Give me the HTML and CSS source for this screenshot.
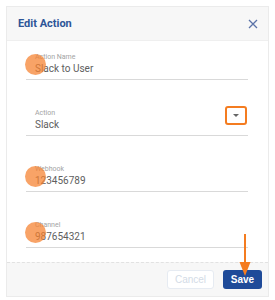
FILE: index.html
```html
<!DOCTYPE html>
<html lang="en">
<head>
    <meta charset="UTF-8">
    <meta name="viewport" content="width=device-width, initial-scale=1.0">
    <title>Edit Action</title>
    <link rel="stylesheet" href="styles.css">
</head>
<body>
    <div class="modal">
        <div class="modal-header">
            <div class="modal-title">Edit Action</div>
            <svg class="close-icon" width="10" height="10" viewBox="0 0 10 10"><path d="M1 1L9 9M9 1L1 9" stroke="#5b73a8" stroke-width="1.3" fill="none"/></svg>
        </div>
        <div class="modal-body">
            <div class="field">
                <div class="field-label">Action Name</div>
                <div class="field-value">Slack to User</div>
                <span class="dot"></span>
            </div>
            <div class="field">
                <div class="field-label">Action</div>
                <div class="field-value">Slack</div>
                <span class="select-box"><span class="caret"></span></span>
            </div>
            <div class="field">
                <div class="field-label">Webhook</div>
                <div class="field-value">123456789</div>
                <span class="dot"></span>
            </div>
            <div class="field">
                <div class="field-label">Channel</div>
                <div class="field-value">987654321</div>
                <span class="dot"></span>
            </div>
        </div>
        <div class="modal-footer">
            <button class="btn btn-cancel">Cancel</button>
            <button class="btn btn-save">Save</button>
        </div>
        <svg class="arrow" width="14" height="44" viewBox="0 0 14 44"><path d="M7 0V32" stroke="#f47c20" stroke-width="2"/><path d="M1.5 28L7 42L12.5 28Z" fill="#f47c20"/></svg>
    </div>
</body>
</html>
```

FILE: styles.css
```css
* { margin: 0; padding: 0; box-sizing: border-box; }
body { font-family: Roboto, "Liberation Sans", Arial, sans-serif; background: #fff; width: 275px; height: 300px; overflow: hidden; }
.modal { position: relative; margin: 6px 6px 0 6px; height: 291px; border: 1px solid #ebebeb; background: #fff; display: flex; flex-direction: column; }
.modal-header { height: 34px; background: #f7f7f7; display: flex; align-items: center; justify-content: space-between; padding: 0 10px 0 11px; border-bottom: 1px solid #efefef; }
.modal-title { font-size: 11px; font-weight: bold; color: #2e5597; }
.close-icon { display: block; }
.modal-body { flex-grow: 1; padding: 11px 20px 0 19px; display: flex; flex-direction: column; gap: 28px; }
.field { position: relative; border-bottom: 1px solid #d9d9d9; padding: 0 0 3px 9px; }
.field-label { font-size: 7px; line-height: 10px; color: #a3a3a3; }
.field-value { font-size: 10px; line-height: 14px; color: #606060; }
.dot { position: absolute; left: -1px; top: 2px; width: 21px; height: 21px; border-radius: 50%; background: rgba(245, 128, 45, 0.72); }
.select-box { position: absolute; right: 1px; top: -2px; width: 22px; height: 19px; border: 2px solid #f47c20; border-radius: 3px; display: flex; align-items: center; justify-content: center; }
.caret { width: 0; height: 0; border-left: 3px solid transparent; border-right: 3px solid transparent; border-top: 3px solid #666; }
.modal-footer { height: 34px; background: #f7f7f7; border-top: 1px dashed #e2e2e2; display: flex; align-items: center; justify-content: flex-end; gap: 9px; padding-right: 6px; }
.btn { font-family: "Liberation Sans", Arial, sans-serif; font-size: 10px; height: 19px; border-radius: 3px; cursor: pointer; }
.btn-cancel { width: 47px; background: #fff; border: 1px solid #e6ebf2; color: #d3dbe6; }
.btn-save { width: 39px; background: #1f4b99; border: none; color: #fff; font-weight: bold; }
.arrow { position: absolute; left: 231px; top: 227px; }
```
